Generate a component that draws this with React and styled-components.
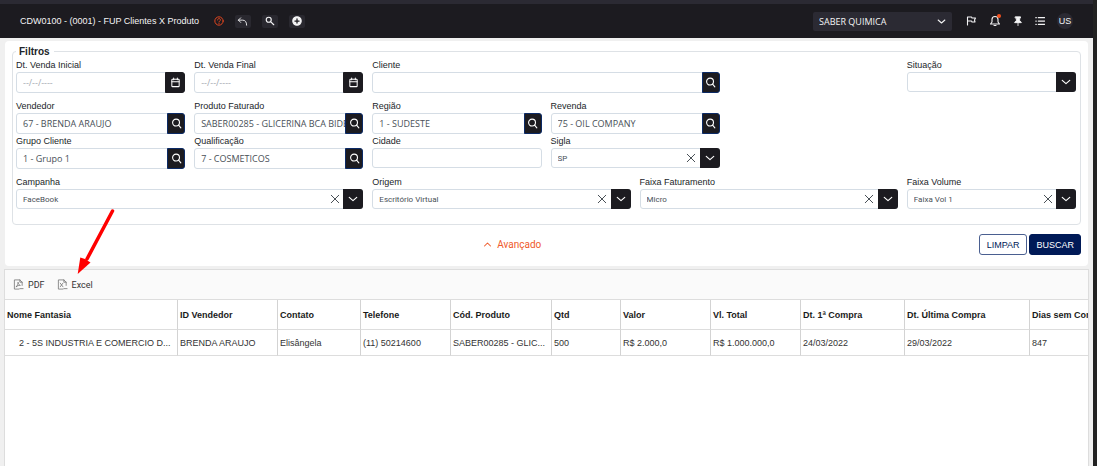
import React from "react";
import styled, { createGlobalStyle, css } from "styled-components";

const ui = `"Liberation Sans", Arial, sans-serif`;
const compact = `Roboto, "Liberation Sans", sans-serif`;
const field = `"Open Sans", "Segoe UI", sans-serif`;

const GlobalStyle = createGlobalStyle`
  *, *::before, *::after { box-sizing: border-box; }
  body { margin: 0; background: #f0f0f0; font-family: ${ui}; font-size: 9px; color: #212529; }
  button, input, select { font: inherit; color: inherit; margin: 0; padding: 0; border: 0; background: none; }
  button { cursor: pointer; }
`;

const Page = styled.div`
  position: relative;
  display: flex;
  flex-direction: column;
  min-height: 100vh;
  border-right: 4px solid #222222;
  overflow: hidden;
`;

const TopBar = styled.header`
  display: flex;
  align-items: center;
  height: 38px;
  padding: 0 20px;
  border-top: 4px solid #2b2a33;
  background: #1c1b20;
  color: #f4f4f5;
`;

const Title = styled.h1`
  margin: 0 15px 0 0;
  font-size: 9px;
  font-weight: 400;
  white-space: nowrap;
`;

const Tools = styled.div`
  display: flex;
  align-items: center;
  gap: 11px;
  flex: 1;
`;

const HelpButton = styled.button`
  display: flex;
  color: #e2461f;
`;

const ToolButton = styled.button`
  display: grid;
  place-items: center;
  width: 16px;
  height: 13px;
  border-radius: 2px;
  background: #29282f;
  color: #f4f4f5;
`;

const Company = styled.div`
  position: relative;
  display: flex;
  align-items: center;
  width: 139px;
  height: 19px;
  border-radius: 2px;
  background: #2b2a33;
  font-family: ${field};
`;

const CompanySelect = styled.select`
  appearance: none;
  width: 100%;
  height: 100%;
  padding: 0 20px 0 6px;
  outline: none;
`;

const CompanyCaret = styled.span`
  position: absolute;
  right: 6px;
  display: flex;
  pointer-events: none;
`;

const TopIcons = styled.nav`
  display: flex;
  align-items: center;
  gap: 12px;
  margin-left: 13px;
`;

const TopIcon = styled.button`
  position: relative;
  display: flex;
`;

const Dot = styled.span`
  position: absolute;
  top: -1px;
  right: 0;
  width: 4px;
  height: 4px;
  border-radius: 50%;
  background: #f4511e;
`;

const Avatar = styled.button`
  display: grid;
  place-items: center;
  width: 16px;
  height: 16px;
  border-radius: 50%;
  background: #2b2a33;
`;

const FilterPanel = styled.form`
  margin: 3px 5px 0;
  padding: 4px 7px 11px;
  border-radius: 4px;
  background: #ffffff;
`;

const Filters = styled.fieldset`
  margin: 0;
  padding: 0 4px 15px 3px;
  border: 1px solid #dee2e6;
  border-radius: 4px;
  min-width: 0;
`;

const Legend = styled.legend`
  padding: 0 4px 0 3px;
  font-size: 10px;
  line-height: 13px;
  font-weight: 700;
`;

const Row = styled.div`
  display: grid;
  grid-template-columns: repeat(12, minmax(0, 1fr));
  column-gap: 9px;
  margin-top: ${(p) => (p.$spaced ? "6px" : "0")};
`;

const Field = styled.div`
  grid-column: ${(p) => p.$start} / span ${(p) => p.$span};
  display: flex;
  flex-direction: column;
`;

const Label = styled.label`
  line-height: 14px;
  white-space: nowrap;
`;

const Control = styled.div`
  display: flex;
  height: ${(p) => (p.$select ? "20px" : "21px")};
  border: 1px solid #d5dde5;
  border-radius: 3px;
  background: #ffffff;
  color: #495057;
  font-family: ${(p) => (p.$select ? compact : field)};
  font-size: ${(p) => (p.$select ? "8px" : "9px")};
`;

const textual = css`
  flex: 1;
  min-width: 0;
  padding: 0 0 0 6px;
  outline: none;
`;

const Input = styled.input`
  ${textual}
  &::placeholder { color: #a5abb2; opacity: 1; }
`;

const Select = styled.select`
  ${textual}
  appearance: none;
`;

const ClearButton = styled.button`
  display: grid;
  place-items: center;
  width: 17px;
  color: #495057;
`;

const addon = css`
  display: grid;
  place-items: center;
  margin: -1px -1px -1px 0;
  border-radius: 0 3px 3px 0;
  background: #1c1b20;
  color: #ffffff;
`;

const AddonButton = styled.button`
  ${addon}
  width: ${(p) => (p.$framed ? "18px" : "20px")};
  border: 1px solid ${(p) => (p.$framed ? "#0b2a66" : "#1c1b20")};
`;

const Caret = styled.span`
  ${addon}
  width: 20px;
  pointer-events: none;
`;

const PanelFooter = styled.div`
  display: flex;
  align-items: center;
  gap: 2px;
  margin-top: 9px;
`;

const Advanced = styled.div`
  flex: 1;
  display: flex;
  justify-content: center;
  padding-left: 36px;
`;

const AdvancedLink = styled.button`
  display: flex;
  align-items: center;
  gap: 5px;
  color: #ef5b2b;
  font-family: ${compact};
  font-size: 10px;
`;

const ActionButton = styled.button`
  height: 21px;
  padding: 0 ${(p) => (p.$primary ? "6px" : "7px")};
  border: 1px solid ${(p) => (p.$primary ? "#001a57" : "#4a5f90")};
  border-radius: 3px;
  background: ${(p) => (p.$primary ? "#001a57" : "#ffffff")};
  color: ${(p) => (p.$primary ? "#ffffff" : "#001a57")};
`;

const Results = styled.section`
  flex: 1;
  display: flex;
  flex-direction: column;
  margin: 3px 4px 0;
  border: 1px solid #dddddd;
  border-bottom: 0;
  background: #ffffff;
`;

const ExportBar = styled.div`
  display: flex;
  align-items: center;
  gap: 12px;
  height: 30px;
  padding: 0 8px;
  border-bottom: 1px solid #dddddd;
  background: #fafafa;
  font-family: ${compact};
`;

const ExportButton = styled.button`
  display: flex;
  align-items: center;
  gap: 4px;
  color: #333333;
`;

const TableScroll = styled.div`
  overflow: hidden;
`;

const Table = styled.table`
  table-layout: fixed;
  width: 1135px;
  min-width: 100%;
  border-collapse: separate;
  border-spacing: 0;
`;

const cell = css`
  padding: 0 0 0 2px;
  border-right: 1px solid #d3d3d3;
  border-bottom: 1px solid #dddddd;
  overflow: hidden;
  text-align: left;
  text-overflow: ellipsis;
  white-space: nowrap;
`;

const Th = styled.th`
  ${cell}
  width: ${(p) => p.$width}px;
  height: 30px;
  color: #1a1a1a;
  font-weight: 700;
`;

const Td = styled.td`
  ${cell}
  height: 26px;
  color: #333333;
  &:first-child { padding-left: 14px; }
`;

const Pointer = styled.svg`
  position: absolute;
  left: 70px;
  top: 205px;
  pointer-events: none;
`;

const Icon = ({ size = 12, width = 2, children, ...rest }) => (
  <svg width={size} height={size} viewBox="0 0 24 24" fill="none" stroke="currentColor"
    strokeWidth={width} strokeLinecap="round" strokeLinejoin="round" aria-hidden="true" {...rest}>
    {children}
  </svg>
);

const SearchIcon = () => (
  <Icon size={11} width={2.4}><circle cx="11" cy="10" r="7.5" /><path d="m16.5 15.5 5 6" /></Icon>
);
const ChevronIcon = ({ up, size = 10 }) => (
  <Icon size={size} width={2.8}><path d={up ? "m4 16 8-8 8 8" : "m3 8 9 8 9-8"} /></Icon>
);
const CalendarIcon = () => (
  <Icon size={11} width={2.2}><rect x="4" y="5" width="16" height="16" rx="1.5" /><path d="M4 10.5h16M8 2v4M16 2v4" /></Icon>
);
const CloseIcon = () => (
  <Icon size={10} width={2.4}><path d="m3 3 18 18M21 3 3 21" /></Icon>
);
const FileIcon = ({ children }) => (
  <Icon size={11} width={1.8} stroke="#777777">
    <path d="M20 14V7l-5-5H3v20h10" /><path d="M15 2v5h5" />{children}<path d="M15 21h7" />
  </Icon>
);

function SearchField({ id, label, start, span = 2, value = "" }) {
  return (
    <Field $start={start} $span={span}>
      <Label htmlFor={id}>{label}</Label>
      <Control>
        <Input id={id} type="text" defaultValue={value} />
        <AddonButton type="button" $framed aria-label={`Pesquisar ${label}`}><SearchIcon /></AddonButton>
      </Control>
    </Field>
  );
}

function DateField({ id, label, start }) {
  return (
    <Field $start={start} $span={2}>
      <Label htmlFor={id}>{label}</Label>
      <Control>
        <Input id={id} type="text" placeholder="--/--/----" />
        <AddonButton type="button" aria-label={`Calendário ${label}`}><CalendarIcon /></AddonButton>
      </Control>
    </Field>
  );
}

function SelectField({ id, label, start, span = 2, value }) {
  return (
    <Field $start={start} $span={span}>
      <Label htmlFor={id}>{label}</Label>
      <Control $select>
        <Select id={id} defaultValue={value}><option>{value}</option></Select>
        {value && <ClearButton type="button" aria-label={`Limpar ${label}`}><CloseIcon /></ClearButton>}
        <Caret><ChevronIcon /></Caret>
      </Control>
    </Field>
  );
}

const columns = [
  ["Nome Fantasia", 173, "2 - 5S INDUSTRIA E COMERCIO D..."],
  ["ID Vendedor", 100, "BRENDA ARAUJO"],
  ["Contato", 83, "Elisângela"],
  ["Telefone", 90, "(11) 50214600"],
  ["Cód. Produto", 101, "SABER00285 - GLIC..."],
  ["Qtd", 69, "500"],
  ["Valor", 90, "R$ 2.000,0"],
  ["Vl. Total", 90, "R$ 1.000.000,0"],
  ["Dt. 1ª Compra", 104, "24/03/2022"],
  ["Dt. Última Compra", 125, "29/03/2022"],
  ["Dias sem Compra", 110, "847"],
];

export default function App() {
  return (
    <Page>
      <GlobalStyle />
      <TopBar>
        <Title>CDW0100 - (0001) - FUP Clientes X Produto</Title>
        <Tools>
          <HelpButton aria-label="Ajuda">
            <Icon size={10} width={2.4}>
              <circle cx="12" cy="12" r="10" />
              <path d="M8.5 9.5c0-4.5 7-4.5 7 0 0 2.5-3.5 2.5-3.5 5M12 18v.2" />
            </Icon>
          </HelpButton>
          <ToolButton aria-label="Voltar">
            <Icon size={11} width={2}><path d="M8 4 3 9l5 5" /><path d="M3 9h9c6 0 9 4 9 11" /></Icon>
          </ToolButton>
          <ToolButton aria-label="Pesquisar">
            <Icon size={10} width={2.8}><circle cx="9" cy="9" r="6" /><path d="m14 14 7 7" /></Icon>
          </ToolButton>
          <ToolButton aria-label="Adicionar">
            <Icon size={10} width={3}>
              <circle cx="12" cy="12" r="10" fill="currentColor" />
              <path d="M12 7v10M7 12h10" stroke="#1c1b20" />
            </Icon>
          </ToolButton>
        </Tools>
        <Company>
          <CompanySelect aria-label="Empresa"><option>SABER QUIMICA</option></CompanySelect>
          <CompanyCaret><ChevronIcon size={9} /></CompanyCaret>
        </Company>
        <TopIcons>
          <TopIcon aria-label="Sinalizar">
            <Icon size={12} width={2.2}><path d="M5 20V4h8l1 2h7l-2 4 1 4h-6l-1-2H5" /></Icon>
          </TopIcon>
          <TopIcon aria-label="Notificações">
            <Icon size={12} width={2.2}><path d="M3 18h18l-3-4V9c0-8-12-8-12 0v5zM10 21h4" /></Icon>
            <Dot />
          </TopIcon>
          <TopIcon aria-label="Fixar">
            <Icon size={10} width={2}>
              <path d="M6 2h12v3h-2v6l4 4v1H4v-1l4-4V5H6z" fill="currentColor" /><path d="M12 16v7" />
            </Icon>
          </TopIcon>
          <TopIcon aria-label="Menu">
            <Icon size={10} width={3}><path d="M2 4h1M2 12h1M2 20h1M8 4h15M8 12h15M8 20h15" /></Icon>
          </TopIcon>
          <Avatar>US</Avatar>
        </TopIcons>
      </TopBar>

      <FilterPanel onSubmit={(e) => e.preventDefault()}>
        <Filters>
          <Legend>Filtros</Legend>
          <Row>
            <DateField id="inicio" label="Dt. Venda Inicial" start={1} />
            <DateField id="fim" label="Dt. Venda Final" start={3} />
            <SearchField id="cliente" label="Cliente" start={5} span={4} />
            <SelectField id="situacao" label="Situação" start={11} />
          </Row>
          <Row $spaced>
            <SearchField id="vendedor" label="Vendedor" start={1} value="67 - BRENDA ARAUJO" />
            <SearchField id="produto" label="Produto Faturado" start={3} value="SABER00285 - GLICERINA BCA BIDEST" />
            <SearchField id="regiao" label="Região" start={5} value="1 - SUDESTE" />
            <SearchField id="revenda" label="Revenda" start={7} value="75 - OIL COMPANY" />
          </Row>
          <Row>
            <SearchField id="grupo" label="Grupo Cliente" start={1} value="1 - Grupo 1" />
            <SearchField id="qualificacao" label="Qualificação" start={3} value="7 - COSMETICOS" />
            <Field $start={5} $span={2}>
              <Label htmlFor="cidade">Cidade</Label>
              <Control $select><Input id="cidade" type="text" /></Control>
            </Field>
            <SelectField id="sigla" label="Sigla" start={7} value="SP" />
          </Row>
          <Row $spaced>
            <SelectField id="campanha" label="Campanha" start={1} span={4} value="FaceBook" />
            <SelectField id="origem" label="Origem" start={5} span={3} value="Escritório Virtual" />
            <SelectField id="faturamento" label="Faixa Faturamento" start={8} span={3} value="Micro" />
            <SelectField id="volume" label="Faixa Volume" start={11} value="Faixa Vol 1" />
          </Row>
        </Filters>
        <PanelFooter>
          <Advanced>
            <AdvancedLink type="button"><ChevronIcon up size={9} />Avançado</AdvancedLink>
          </Advanced>
          <ActionButton type="reset">LIMPAR</ActionButton>
          <ActionButton type="submit" $primary>BUSCAR</ActionButton>
        </PanelFooter>
      </FilterPanel>

      <Results>
        <ExportBar>
          <ExportButton>
            <FileIcon><path d="M7 17c3-3 5-8 4-10 0 4 3 6 5 7-3 0-6 0-9 3" /></FileIcon>PDF
          </ExportButton>
          <ExportButton>
            <FileIcon><path d="m7 9 6 8M13 9l-6 8" /></FileIcon>Excel
          </ExportButton>
        </ExportBar>
        <TableScroll>
          <Table>
            <thead>
              <tr>{columns.map(([name, width]) => <Th key={name} $width={width} scope="col">{name}</Th>)}</tr>
            </thead>
            <tbody>
              <tr>{columns.map(([name, , value]) => <Td key={name}>{value}</Td>)}</tr>
            </tbody>
          </Table>
        </TableScroll>
      </Results>

      <Pointer width="48" height="72" viewBox="0 0 48 72" aria-hidden="true">
        <path d="M42.5 6 17 54" stroke="#ff0000" strokeWidth="3.5" strokeLinecap="round" />
        <path d="M7.7 69 10.3 52.5 15 54 20.5 57.5z" fill="#ff0000" />
      </Pointer>
    </Page>
  );
}
